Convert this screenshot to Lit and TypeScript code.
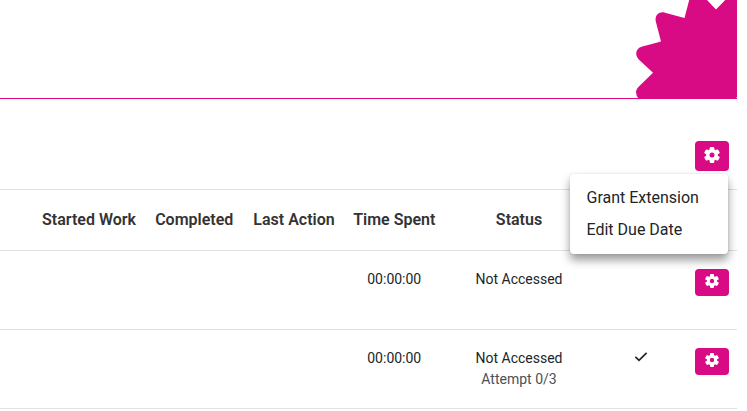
import { LitElement, html, css, svg, nothing } from "lit";
import { customElement, property } from "lit/decorators.js";

const GEAR = svg`
  <circle cx="8" cy="8" r="4.2" fill="none" stroke="currentColor" stroke-width="3.4"/>
  ${[0, 60, 120, 180, 240, 300].map((angle) => svg`<rect x="5.7" y="0" width="4.6" height="4.8" rx="1.2" fill="currentColor" transform=${`rotate(${angle} 8 8)`}/>`)}`;

@customElement("gear-button")
class GearButton extends LitElement {
  @property({ type: Boolean, reflect: true }) large = false;

  static styles = css`
    :host { display: block; width: 34px; height: 27px; }
    :host([large]) { height: 30px; }
    .button {
      display: flex; justify-content: center; align-items: flex-start;
      box-sizing: border-box; width: 100%; height: 100%;
      margin: 0; padding: 5px 0 0; border: 0; border-radius: 4px;
      background: #d80b84; color: #fff;
    }
    .icon { display: block; width: 14px; height: 14px; }
    :host([large]) .button { padding-top: 6px; }
    :host([large]) .icon { width: 16px; height: 16px; }
  `;

  render() {
    return html`<button class="button" aria-label="Settings">
      <svg class="icon" viewBox="0 0 16 16">${GEAR}</svg>
    </button>`;
  }
}

interface Row {
  time: string;
  status: string;
  attempt?: string;
  checked?: boolean;
}

const HEADINGS = ["Started Work", "Completed", "Last Action", "Time Spent", "Status"];

const ROWS: Row[] = [
  { time: "00:00:00", status: "Not Accessed" },
  { time: "00:00:00", status: "Not Accessed", attempt: "Attempt 0/3", checked: true },
];

@customElement("app-root")
class AppRoot extends LitElement {
  static styles = css`
    :host {
      display: block; box-sizing: border-box; width: 747px; height: 411px;
      padding-right: 10px; overflow: hidden; background: #fff;
      font-family: Roboto, sans-serif; color: #212529;
    }
    .banner {
      display: flex; justify-content: flex-end; box-sizing: border-box;
      height: 99px; border-bottom: 1px solid #d80b84;
    }
    .seal { display: block; flex: none; width: 102px; height: 99px; }
    .toolbar {
      display: flex; justify-content: flex-end; box-sizing: border-box;
      height: 90px; padding: 42px 8px 0 0;
    }
    .anchor { position: relative; height: 30px; }
    .menu {
      position: absolute; z-index: 1; top: 33px; right: 1px;
      box-sizing: border-box; width: 158px; height: 80px; padding: 8px 0;
      border-radius: 4px; background: #fff;
      box-shadow: 0 6px 10px rgba(0,0,0,.4), 0 0 2px rgba(0,0,0,.12);
    }
    .item { padding-left: 16.5px; font-size: 16px; line-height: 32px; white-space: nowrap; }
    .row {
      display: grid; box-sizing: border-box; height: 79px; padding-left: 32.5px;
      grid-template-columns: 113px 97.5px 102px 98.5px 151px 92.5px 50px;
      border-bottom: 1px solid #dee2e6; text-align: center;
      font-size: 14px; line-height: 21px; white-space: nowrap;
    }
    .head {
      height: 62px; border-top: 1px solid #dee2e6;
      font-size: 16px; font-weight: 600; line-height: 60px; color: #333;
    }
    .cell { padding-top: 18px; }
    .note { color: #495057; }
    .check { display: block; width: 14px; height: 12px; margin: 3px auto 0; }
    .action { display: flex; justify-content: center; }
  `;

  renderRow(row: Row) {
    return html`<div class="row">
      <div></div><div></div><div></div>
      <div class="cell">${row.time}</div>
      <div class="cell">
        <div>${row.status}</div>
        ${row.attempt ? html`<div class="note">${row.attempt}</div>` : nothing}
      </div>
      <div class="cell">
        ${row.checked
          ? html`<svg class="check" viewBox="0 0 14 12">
              <path d="M1.4 5.9 5 9.4 12.6 1.8" fill="none" stroke="#212529" stroke-width="1.7"/>
            </svg>`
          : nothing}
      </div>
      <div class="cell action"><gear-button></gear-button></div>
    </div>`;
  }

  render() {
    return html`
      <div class="banner">
        <svg class="seal" viewBox="635 0 102 99">
          <path fill="#d80b84" d="M639 99Q635.8 96 636 91.5Q636.2 89.3 638.6 86.8L653 72.8L638.8 59.5C634.5 55 635.7 48.4 641.5 46.7L661 41.6L655.8 21.5C654.5 15.5 659 11 665 12.7L684.5 18L689.2 0H707L716 9.5L725.2 0H737V97L735 99Z"/>
        </svg>
      </div>
      <div class="toolbar">
        <div class="anchor">
          <gear-button large></gear-button>
          <div class="menu">
            <div class="item">Grant Extension</div>
            <div class="item">Edit Due Date</div>
          </div>
        </div>
      </div>
      <div class="row head">${HEADINGS.map((h) => html`<div>${h}</div>`)}</div>
      ${ROWS.map((r) => this.renderRow(r))}
    `;
  }
}
